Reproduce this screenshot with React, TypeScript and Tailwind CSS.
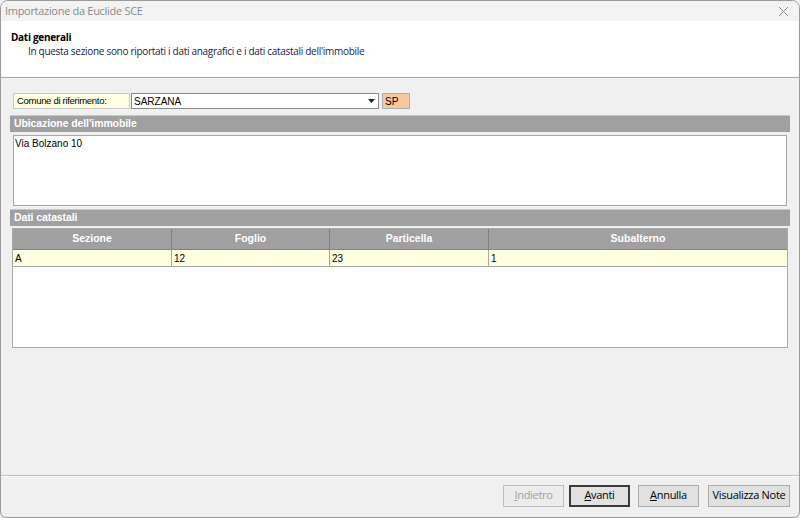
import React from 'react';

const cols = ['Sezione', 'Foglio', 'Particella', 'Subalterno'];
const row = ['A', '12', '23', '1'];

function SectionBar({ title }: { title: string }) {
  return (
    <div className="h-[17px] bg-[#a0a0a0] border-t border-[#c8c8c8] flex items-center pl-[4px] text-white font-bold text-[10.5px] tracking-[-0.1px]">
      {title}
    </div>
  );
}

function Btn({ label, u, rest, disabled, primary, width }: { label?: string; u?: string; rest?: string; disabled?: boolean; primary?: boolean; width: string }) {
  return (
    <button
      className={
        'h-[22px] flex items-center justify-center text-[11px] bg-[#e1e1e1] ' +
        width +
        ' ' +
        (primary ? 'border-2 border-[#3c3c3c]' : disabled ? 'border border-[#bfbfbf] text-[#a0a0a0] bg-[#ececec]' : 'border border-[#adadad]')
      }
    >
      {u ? (
        <span>
          <span className="underline">{u}</span>
          {rest}
        </span>
      ) : (
        label
      )}
    </button>
  );
}

export default function App() {
  return (
    <div className="w-[800px] h-[518px] bg-[#f0f0f0] font-['Liberation_Sans',Arial,sans-serif] text-[11px] text-black">
      <div className="w-full h-full flex flex-col border border-[#9a9a9a] rounded-t-[8px] rounded-b-[6px] overflow-hidden">
        {/* title bar */}
        <div className="h-[20px] bg-[#f3f3f3] flex items-center justify-between pl-[4px] pr-[10px] shrink-0">
          <span className="text-[11px] text-[#8a8a8a] font-['Open_Sans',sans-serif] tracking-[-0.3px]">Importazione da Euclide SCE</span>
          <svg width="11" height="11" viewBox="0 0 11 11" className="text-[#8a8a8a]">
            <path d="M1 1L10 10M10 1L1 10" stroke="currentColor" strokeWidth="1" />
          </svg>
        </div>

        {/* header */}
        <div className="h-[57px] bg-white border-b border-[#a8a8a8] pl-[10px] pt-[10px] shrink-0 font-['Open_Sans',sans-serif] tracking-[-0.3px]">
          <div className="text-[10px] font-bold leading-[13px]">Dati generali</div>
          <div className="text-[10px] leading-[15px] pl-[17px] text-[#1a1a4a]">In questa sezione sono riportati i dati anagrafici e i dati catastali dell'immobile</div>
        </div>

        {/* body */}
        <div className="flex-1 flex flex-col px-[9px] pt-[15px]">
          <div className="flex items-center h-[16px] pl-[3px]">
            <div className="w-[117px] h-[16px] bg-[#ffffe1] border border-[#c8c8c8] flex items-center pl-[3px] text-[9.5px] tracking-[-0.3px]">Comune di riferimento:</div>
            <div className="ml-[1px] w-[248px] h-[16px] bg-white border border-[#8a8a8a] flex items-center justify-between pl-[2px] pr-[3px]">
              <span className="text-[10px]">SARZANA</span>
              <svg width="7" height="4" viewBox="0 0 7 4">
                <path d="M0 0H7L3.5 4Z" fill="#222" />
              </svg>
            </div>
            <div className="ml-[3px] w-[28px] h-[16px] bg-[#f5c9a0] border border-[#b0b0b0] flex items-center pl-[2px] text-[10px]">SP</div>
          </div>

          <div className="mt-[6px]">
            <SectionBar title="Ubicazione dell'immobile" />
          </div>
          <div className="mx-[3px] mt-[3px] h-[71px] bg-white border border-[#a8a8a8] px-[1px] py-[1px] text-[10px] leading-[13px]">Via Bolzano 10</div>

          <div className="mt-[3px]">
            <SectionBar title="Dati catastali" />
          </div>
          <div className="mx-[2px] mt-[2px] h-[120px] bg-white border border-[#a8a8a8] flex flex-col">
            <div className="grid grid-cols-[159px_158px_159px_1fr] h-[21px] bg-[#a0a0a0]">
              {cols.map((c, i) => (
                <div key={c} className={'flex items-center justify-center text-white font-bold text-[10.5px] border-b border-[#888] ' + (i < 3 ? 'border-r border-[#808080]' : '')}>
                  {c}
                </div>
              ))}
            </div>
            <div className="grid grid-cols-[159px_158px_159px_1fr] h-[17px] bg-[#ffffe1] border-b border-[#a8a8a8]">
              {row.map((v, i) => (
                <div key={i} className={'flex items-center pl-[2px] text-[10px] ' + (i < 3 ? 'border-r border-[#a8a8a8]' : '')}>
                  {v}
                </div>
              ))}
            </div>
          </div>
        </div>

        {/* footer */}
        <div className="h-[42px] shrink-0 border-t border-[#c0c0c0] shadow-[inset_0_1px_0_#ffffff] flex items-center justify-end pr-[9px] pb-[2px] font-['Open_Sans',sans-serif] tracking-[-0.3px]">
          <Btn u="I" rest="ndietro" disabled width="w-[61px]" />
          <div className="w-[5px]" />
          <Btn u="A" rest="vanti" primary width="w-[61px]" />
          <div className="w-[8px]" />
          <Btn u="A" rest="nnulla" width="w-[61px]" />
          <div className="w-[9px]" />
          <Btn label="Visualizza Note" width="w-[82px]" />
        </div>
      </div>
    </div>
  );
}
